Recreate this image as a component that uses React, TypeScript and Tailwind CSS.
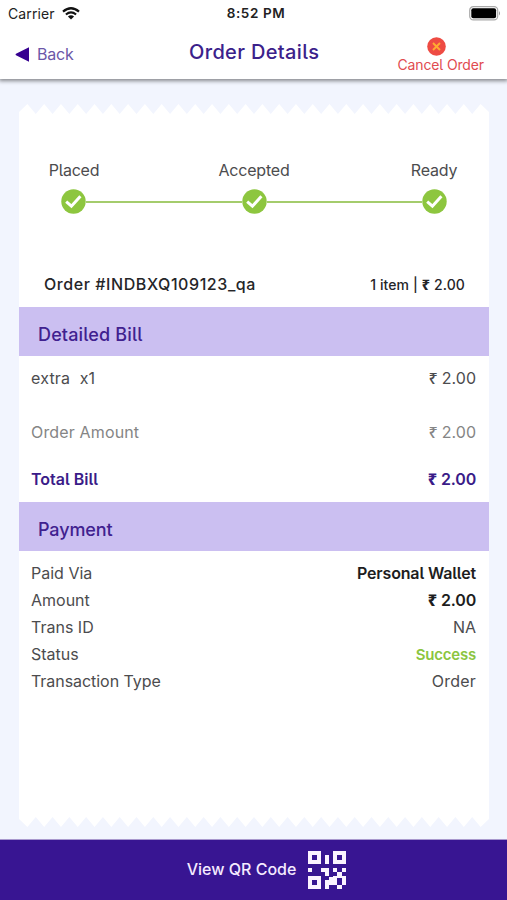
import React from "react";

const TEETH = 28;
const TOOTH = 470 / TEETH;

function TornEdge({ flip = false }: { flip?: boolean }) {
  let points = "0,12 0,8";
  for (let i = 0; i < TEETH; i++) {
    points += ` ${i * TOOTH + TOOTH / 2},0`;
    points += i < TEETH - 1 ? ` ${(i + 1) * TOOTH},10` : " 470,8";
  }
  points += " 470,12";
  return (
    <svg className={flip ? "block h-3 w-full -scale-y-100" : "block h-3 w-full"} viewBox="0 0 470 12" preserveAspectRatio="none">
      <polygon points={points} fill="#ffffff" />
    </svg>
  );
}

function Check() {
  return (
    <svg className="size-[25px] shrink-0" viewBox="0 0 25 25">
      <circle cx="12.5" cy="12.5" r="12.2" fill="#8dc63f" />
      <path d="M5.2 12.6 L10.4 17.2 L19.4 7.2" fill="none" stroke="#fff" strokeWidth="3" />
    </svg>
  );
}

function Rupee({ bold = false }: { bold?: boolean }) {
  return (
    <span
      className={
        bold
          ? "mr-[4px] font-['Noto_Sans','DejaVu_Sans',sans-serif] text-[1.02em] leading-none font-extrabold tracking-normal"
          : "mr-[4px] font-['Noto_Sans','DejaVu_Sans',sans-serif] text-[1.02em] leading-none font-medium tracking-normal"
      }
    >
      ₹
    </span>
  );
}

function QrIcon() {
  return (
    <svg className="-ml-px h-[38px] w-[38px]" viewBox="0 0 38 38" fill="#fbf3ff">
      <path fillRule="evenodd" d="M0 0h13v13H0zM4 4v5h5V4zM25 0h13v13H25zM29 4v5h5V4zM0 25h13v13H0zM4 29v5h5v-5z" />
      <path d="M17 4h4v9h-4zM0 17h4v4H0zM13 17h8v8h-4v-4h-4zM25 17h4v4h-4zM34 17h4v4h-4zM29 21h5v4h-5zM25 25h4v9h-8v4h-4v-9h4v-3h4zM34 25h4v9h-4zM29 25h5v2h-5zM29 34h5v4h-5z" />
    </svg>
  );
}

export default function App() {
  return (
    <div className="flex h-[900px] w-[507px] flex-col overflow-hidden bg-[#f2f5fe] font-['Inter',sans-serif] text-[16px] leading-[27px] text-[#4c4c4e] [font-feature-settings:'cv05']">
      <header className="z-10 h-[79px] shrink-0 bg-white shadow-[0_1px_4px_1px_rgba(0,0,0,0.45)]">
        <div className="grid h-[27px] grid-cols-3 items-center pl-[8px] pr-[6px] text-[14px] leading-[27px] text-[#222] [font-feature-settings:normal]">
          <div className="flex items-center gap-[7px]">
            <span className="tracking-[0.1px]">Carrier</span>
            <svg className="h-[13px] w-[18px]" viewBox="0 0 18 13">
              <path d="M1 4.7 Q9 -2.2 17 4.7M3.9 7.5 Q9 3.4 14.1 7.5" fill="none" stroke="#111" strokeWidth="2.2" />
              <path d="M5.9 9.4 Q9 7 12.1 9.4 L9 12.5Z" fill="#111" />
            </svg>
          </div>
          <span className="whitespace-nowrap pl-[3px] text-center text-[13.5px] font-semibold tracking-[0.6px]">8:52 PM</span>
          <svg className="h-[15px] w-[32px] justify-self-end" viewBox="0 0 32 15">
            <rect x=".7" y=".7" width="28" height="13.2" rx="3.6" fill="none" stroke="#aaa" strokeWidth="1.2" />
            <rect x="2.3" y="2.3" width="24.8" height="10" rx="2" fill="#000" />
            <path d="M30 5 Q32 7.3 30 9.6Z" fill="#999" />
          </svg>
        </div>
        <div className="grid h-[52px] grid-cols-[174px_1fr_auto] items-start pl-[15px] pr-[23px]">
          <div className="flex items-center gap-[7px] pt-[14px] text-[#6c57a8]">
            <svg className="h-[17px] w-[15px]" viewBox="0 0 15 17">
              <path d="M14 1.2 V15.8 L1 9.2 Q0 8.5 1 7.8Z" fill="#360090" />
            </svg>
            <span className="text-[16px] leading-[26px] tracking-[-0.2px]">Back</span>
          </div>
          <h1 className="whitespace-nowrap pt-[12px] text-[20px] font-medium leading-[27px] tracking-[0.35px] text-[#3b218b]">Order Details</h1>
          <div className="flex flex-col items-end pt-[10px]">
            <svg className="mr-[38px] size-[19px]" viewBox="0 0 19 19">
              <circle cx="9.5" cy="9.5" r="9.3" fill="#ee4b43" />
              <path d="M6 6 L13 13M13 6 L6 13" stroke="#ffac31" strokeWidth="1.9" />
            </svg>
            <span className="text-[14px] leading-[17px] tracking-[-0.13px] text-[#e14b50]">Cancel Order</span>
          </div>
        </div>
      </header>

      <main className="flex flex-1 flex-col pl-[19px] pr-[18px] pt-[25px]">
        <TornEdge />
        <section className="flex h-[191px] flex-col bg-white">
          <div className="grid grid-cols-[110px_1fr_110px] pt-[41px] text-center tracking-[-0.2px]">
            <span>Placed</span>
            <span>Accepted</span>
            <span>Ready</span>
          </div>
          <div className="mt-[5px] flex items-center px-[42px]">
            <Check />
            <div className="h-[2px] flex-1 bg-[#a4cc6c]" />
            <Check />
            <div className="h-[2px] flex-1 bg-[#a4cc6c]" />
            <Check />
          </div>
          <div className="mt-auto flex items-center justify-between pb-[9px] pl-[25px] pr-[24px] font-medium text-[#252528]">
            <span className="tracking-[0.57px]">Order #INDBXQ109123_qa</span>
            <span className="text-[14px] tracking-[0.1px]">1 item | <Rupee bold />2.00</span>
          </div>
        </section>

        <h2 className="flex h-[49px] items-center bg-[#cbbff1] pl-[19px] pt-[5px] text-[18px] font-medium tracking-[0.15px] text-[#40218f]">Detailed Bill</h2>
        <section className="h-[146px] bg-white pl-[12px] pr-[13px] pt-[9px]">
          <div className="flex justify-between">
            <span className="whitespace-pre tracking-[0.2px]">extra  x1</span>
            <span><Rupee />2.00</span>
          </div>
          <div className="mt-[27px] flex justify-between text-[#858585]">
            <span className="tracking-[0.15px]">Order Amount</span>
            <span><Rupee />2.00</span>
          </div>
          <div className="mt-[20px] flex justify-between font-semibold text-[#3a1b88]">
            <span>Total Bill</span>
            <span className="tracking-[-0.2px]"><Rupee bold />2.00</span>
          </div>
        </section>

        <h2 className="flex h-[49px] items-center bg-[#cbbff1] pl-[19px] pt-[5px] text-[18px] font-medium tracking-[-0.1px] text-[#40218f]">Payment</h2>
        <section className="h-[264px] bg-white pl-[12px] pr-[13px] pt-[9px]">
          <div className="flex justify-between">
            <span>Paid Via</span>
            <span className="font-semibold tracking-[-0.15px] text-[#1d1d20]">Personal Wallet</span>
          </div>
          <div className="flex justify-between">
            <span>Amount</span>
            <span className="font-semibold tracking-[-0.2px] text-[#1d1d20]"><Rupee bold />2.00</span>
          </div>
          <div className="flex justify-between">
            <span>Trans ID</span>
            <span>NA</span>
          </div>
          <div className="flex justify-between">
            <span>Status</span>
            <span className="text-[15px] font-semibold tracking-[-0.2px] text-[#8bc53f]">Success</span>
          </div>
          <div className="flex justify-between">
            <span className="tracking-[-0.05px]">Transaction Type</span>
            <span className="tracking-[0.2px]">Order</span>
          </div>
        </section>
        <TornEdge flip />
      </main>

      <footer className="flex h-[61px] shrink-0 items-center justify-center gap-[13px] border-t border-[#a999ce] bg-[#381592] pl-[26px] text-[#f5eaff]">
        <span className="pb-[2px] font-medium">View QR Code</span>
        <QrIcon />
      </footer>
    </div>
  );
}
